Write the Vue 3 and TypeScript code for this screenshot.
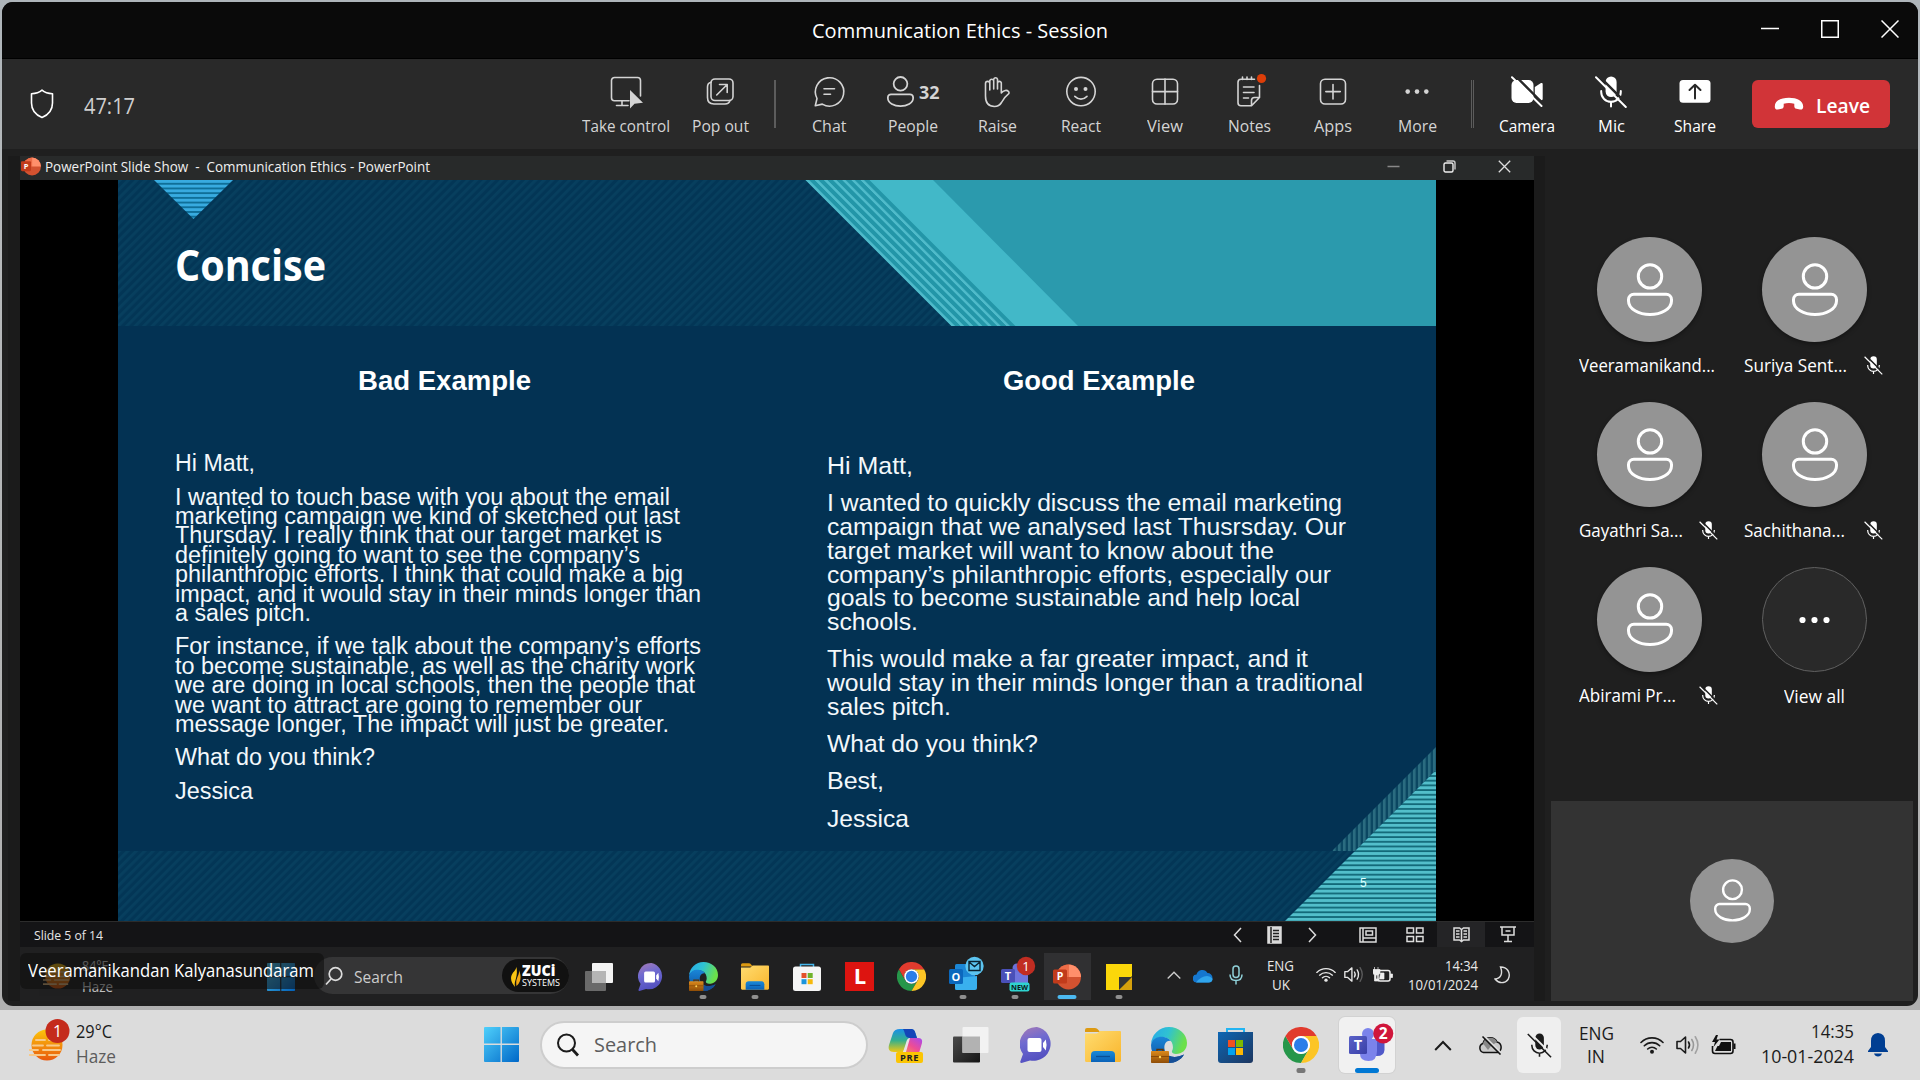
<script setup lang="ts">
import type { Directive } from 'vue'

// Squeezes or stretches a line of text to a given width in pixels.
const vFit: Directive<HTMLElement, number> = {
  mounted(el, { value }) {
    const natural = el.getBoundingClientRect().width
    if (!natural) return
    el.style.transform = `scaleX(${value / natural})`
    el.style.marginRight = `${value - natural}px`
  },
}

interface Line { t: string; w: number }

const showTitle = 'PowerPoint Slide Show\u00a0 -\u00a0 Communication Ethics - PowerPoint'

const badExample: Line[][] = [
  [{ t: 'Hi Matt,', w: 80 }],
  [
    { t: 'I wanted to touch base with you about the email', w: 495 },
    { t: 'marketing campaign we kind of sketched out last', w: 505 },
    { t: 'Thursday. I really think that our target market is', w: 487 },
    { t: 'definitely going to want to see the company’s', w: 465 },
    { t: 'philanthropic efforts. I think that could make a big', w: 508 },
    { t: 'impact, and it would stay in their minds longer than', w: 526 },
    { t: 'a sales pitch.', w: 136 },
  ],
  [
    { t: 'For instance, if we talk about the company’s efforts', w: 526 },
    { t: 'to become sustainable, as well as the charity work', w: 520 },
    { t: 'we are doing in local schools, then the people that', w: 520 },
    { t: 'we want to attract are going to remember our', w: 467 },
    { t: 'message longer, The impact will just be greater.', w: 494 },
  ],
  [{ t: 'What do you think?', w: 200 }],
  [{ t: 'Jessica', w: 78 }],
]

const goodExample: Line[][] = [
  [{ t: 'Hi Matt,', w: 86 }],
  [
    { t: 'I wanted to quickly discuss the email marketing', w: 515 },
    { t: 'campaign that we analysed last Thusrsday. Our', w: 519 },
    { t: 'target market will want to know about the', w: 447 },
    { t: 'company’s philanthropic efforts, especially our', w: 504 },
    { t: 'goals to become sustainable and help local', w: 473 },
    { t: 'schools.', w: 91 },
  ],
  [
    { t: 'This would make a far greater impact, and it', w: 481 },
    { t: 'would stay in their minds longer than a traditional', w: 536 },
    { t: 'sales pitch.', w: 124 },
  ],
  [{ t: 'What do you think?', w: 211 }],
  [{ t: 'Best,', w: 57 }],
  [{ t: 'Jessica', w: 82 }],
]

interface Person { name: string; w: number; muted: boolean }
const people: Person[] = [
  { name: 'Veeramanikand...', w: 136, muted: false },
  { name: 'Suriya Sent...', w: 103, muted: true },
  { name: 'Gayathri Sa...', w: 104, muted: true },
  { name: 'Sachithana...', w: 101, muted: true },
  { name: 'Abirami Pr...', w: 97, muted: true },
]
</script>

<template>
  <div class="screen">
    <svg class="defs" width="0" height="0" aria-hidden="true">
      <defs>
        <linearGradient id="g-win" x1="0" y1="0" x2="1" y2="1"><stop offset="0" stop-color="#4fd0fb" /><stop offset="1" stop-color="#0067c8" /></linearGradient>
        <linearGradient id="g-folder" x1="0" y1="0" x2="1" y2="1"><stop offset="0" stop-color="#ffdc70" /><stop offset="1" stop-color="#f9b52c" /></linearGradient>
        <linearGradient id="g-blue" x1="0" y1="0" x2="0" y2="1"><stop offset="0" stop-color="#1a8ad8" /><stop offset="1" stop-color="#0a62b8" /></linearGradient>
        <linearGradient id="g-edge" x1="0" y1="0" x2="1" y2=".3"><stop offset="0" stop-color="#27a9ea" /><stop offset=".5" stop-color="#2fc2d2" /><stop offset="1" stop-color="#6be04a" /></linearGradient>
        <linearGradient id="g-edge2" x1="0" y1="0" x2="0" y2="1"><stop offset="0" stop-color="#1a86d8" /><stop offset="1" stop-color="#0b4f9e" /></linearGradient>
        <linearGradient id="g-video" x1="0" y1="0" x2=".3" y2="1"><stop offset="0" stop-color="#a77bb5" /><stop offset=".45" stop-color="#6f6ad0" /><stop offset="1" stop-color="#5350c0" /></linearGradient>
        <linearGradient id="g-store" x1="0" y1="0" x2="1" y2="1"><stop offset="0" stop-color="#0d67b4" /><stop offset="1" stop-color="#1d365f" /></linearGradient>
        <linearGradient id="g-sun" x1="0" y1="0" x2="0" y2="1"><stop offset="0" stop-color="#fcc60c" /><stop offset="1" stop-color="#e9590c" /></linearGradient>
        <linearGradient id="g-case" x1="0" y1="0" x2="0" y2="1"><stop offset="0" stop-color="#dc8a1c" /><stop offset="1" stop-color="#8f4d06" /></linearGradient>
        <linearGradient id="g-cop1" x1="0" y1="0" x2="0" y2="1"><stop offset="0" stop-color="#1a8fe8" /><stop offset=".5" stop-color="#35b08c" /><stop offset="1" stop-color="#f2c811" /></linearGradient>
        <linearGradient id="g-cop2" x1="1" y1="0" x2="0" y2="1"><stop offset="0" stop-color="#a648f0" /><stop offset=".5" stop-color="#ee4d94" /><stop offset="1" stop-color="#fb9a50" /></linearGradient>
        <linearGradient id="g-dark" x1="0" y1="0" x2="1" y2="1"><stop offset="0" stop-color="#4a4a4a" /><stop offset="1" stop-color="#151515" /></linearGradient>
        <linearGradient id="g-teams" x1="0" y1="0" x2="1" y2="1"><stop offset="0" stop-color="#5a62c8" /><stop offset="1" stop-color="#3a40a8" /></linearGradient>

        <symbol id="i-person" viewBox="0 0 46 54">
          <g fill="none" stroke="currentColor" stroke-width="3">
            <circle cx="23" cy="13.4" r="11.7" />
            <path d="M6.8 31.2H39.2A5.3 5.3 0 0 1 44.5 36.5V38C44.5 46 34 51.5 23 51.5S1.5 46 1.5 38V36.5A5.3 5.3 0 0 1 6.8 31.2Z" />
          </g>
        </symbol>
        <symbol id="i-mic-off" viewBox="0 0 32 32">
          <rect x="10.6" y=".5" width="11" height="20.5" rx="5.5" fill="currentColor" />
          <path d="M6.2 15v1a9.8 9.8 0 0 0 19.6 0v-1M16 26v4.5" fill="none" stroke="currentColor" stroke-width="2" />
          <path d="M3.6 -.4L33.4 29.4" stroke="var(--cut)" stroke-width="2.4" />
          <path d="M1 1.2L30.8 31" stroke="currentColor" stroke-width="2" />
        </symbol>
        <symbol id="i-win" viewBox="0 0 36 36">
          <path d="M0 1Q0 0 1 0H17V17H0ZM18.4 0H35Q36 0 36 1V17H18.4ZM0 18.4H17V36H1Q0 36 0 35ZM18.4 18.4H36V35Q36 36 35 36H18.4Z" fill="url(#g-win)" />
        </symbol>
        <symbol id="i-folder" viewBox="0 0 36 34">
          <path d="M0 2Q0 0 2 0H10Q12 0 13 1.5L15 4H0Z" fill="#dd9a12" />
          <path d="M0 5.500H12L15 3H35Q36 3 36 4V32.500Q36 34 34.500 34H1.500Q0 34 0 32.500Z" fill="url(#g-folder)" />
          <path d="M6 34V27Q6 23 10 23H26Q30 23 30 27V34Z" fill="url(#g-blue)" />
          <path d="M11 28.500H25" stroke="#0a4f96" stroke-width="1.300" />
        </symbol>
        <symbol id="i-edge" viewBox="0 0 36 36">
          <path d="M0 17A18 18 0 0 1 18 0C28 0 36 7 36 16C36 23 31 27 25 27C22 27 20.500 25.500 21 24C23 21 22 14 17 11.500C11 8.500 2 11 0 17Z" fill="url(#g-edge)" />
          <path d="M0 18C1 11 8 9 13 10C18 11 20 14 20 14C15 13 12 18 14 24C16 30 24 32 33 27.500C30 33 24 36 18 36A18 18 0 0 1 0 18Z" fill="url(#g-edge2)" />
          <path d="M14 24C16 30 24 32 33 27.500C30 33 24 36 18 36Z" fill="#164f96" />
          <rect x="0" y="24" width="18" height="12" rx=".8" fill="url(#g-case)" />
          <path d="M6 24V22.500H12V24" fill="none" stroke="#5d3305" stroke-width="1.400" />
          <path d="M0 29.500H18" stroke="#8a4b08" /><circle cx="9" cy="30" r="1.200" fill="#ffd75c" />
        </symbol>
        <symbol id="i-chrome" viewBox="0 0 48 48">
          <path d="M24 48A24 24 0 0 1 3.200 12L13.600 30A12 12 0 0 0 34.400 30Z" fill="#26964a" />
          <path d="M44.800 12A24 24 0 0 1 24 48L34.400 30A12 12 0 0 0 24 12Z" fill="#fcc525" />
          <path d="M3.200 12A24 24 0 0 1 44.800 12H24A12 12 0 0 0 13.600 30Z" fill="#e13b2e" />
          <circle cx="24" cy="24" r="12" fill="#fff" /><circle cx="24" cy="24" r="9.400" fill="#2b7de9" />
        </symbol>
        <symbol id="i-video" viewBox="0 0 34 36">
          <path d="M17 0A17 17 0 1 1 10 33.500L1.500 36Q0 36 .3 34.500L3 27A17 17 0 0 1 17 0Z" fill="url(#g-video)" />
          <rect x="7.500" y="11" width="14" height="14" rx="2" fill="#fff" />
          <path d="M23 16L25.800 12.500Q27.300 18 25.800 23.500L23 20Z" fill="#fff" />
        </symbol>
        <symbol id="i-sun" viewBox="0 0 34 32">
          <circle cx="18" cy="16" r="15.500" fill="url(#g-sun)" />
          <path d="M4 16.500H14M18 16.500H30M0 21H9M14 21H31M0 26H16M20 26H30M7 11H16M20 11H28" stroke="#f7c98a" stroke-width="1.900" stroke-linecap="round" />
        </symbol>
        <symbol id="i-ppt" viewBox="0 0 28 26">
          <circle cx="15.500" cy="13" r="12.500" fill="#d35230" />
          <path d="M15.500 .5A12.500 12.500 0 0 1 28 13H15.500Z" fill="#ff8f6b" />
          <path d="M15.500 .5A12.500 12.500 0 0 0 3 13H15.500Z" fill="#ed6c47" />
          <rect x="0" y="5.500" width="14" height="14" rx="1.500" fill="#c13b1b" />
          <text x="7" y="16.300" text-anchor="middle" class="glyph" font-size="10.500" fill="#fff">P</text>
        </symbol>
        <symbol id="i-wifi" viewBox="0 0 24 18">
          <g fill="none" stroke="currentColor" stroke-width="1.600" stroke-linecap="round">
            <path d="M1 6.500A15.500 15.500 0 0 1 23 6.500M4.300 9.800A11 11 0 0 1 19.700 9.800M7.700 13A6.200 6.200 0 0 1 16.300 13" />
          </g><circle cx="12" cy="15.800" r="2" fill="currentColor" />
        </symbol>
        <symbol id="i-speaker" viewBox="0 0 24 20">
          <g fill="none" stroke="currentColor" stroke-width="1.600" stroke-linejoin="round" stroke-linecap="round">
            <path d="M1 6.500H4.500L9.500 2V18L4.500 13.500H1Z" /><path d="M12.500 7Q14.500 10 12.500 13" />
            <path d="M15.800 4.500Q19.200 10 15.800 15.500" opacity="var(--mid, 1)" /><path d="M19.300 1.800Q24.500 10 19.300 18.200" opacity=".3" />
          </g>
        </symbol>
      </defs>
    </svg>

    <main class="window">
      <header class="titlebar">
        <span></span>
        <div class="title"><span v-fit="296" class="t">Communication Ethics - Session</span></div>
        <div class="winctl">
          <svg width="18" height="18"><path d="M0 8.500H18" stroke="#fff" stroke-width="1.500" /></svg>
          <svg width="18" height="18"><rect x=".75" y=".75" width="16.500" height="16.500" fill="none" stroke="#fff" stroke-width="1.500" /></svg>
          <svg width="18" height="18"><path d="M.5 .5L17.500 17.500M17.500 .5L.5 17.500" stroke="#fff" stroke-width="1.500" /></svg>
        </div>
      </header>

      <nav class="toolbar">
        <svg class="shield" width="24" height="30" viewBox="0 0 24 30"><path d="M12 1.200C9.500 3.400 5.500 4.600 1.500 4.700V14C1.500 21 5.500 25.800 12 28.500C18.500 25.800 22.500 21 22.500 14V4.700C18.500 4.600 14.500 3.400 12 1.200Z" fill="none" stroke="#fff" stroke-width="1.600" stroke-linejoin="round" /></svg>
        <span v-fit="51" class="t timer">47:17</span>
        <div class="tools">
          <div class="tool wide">
            <svg class="ic" viewBox="0 0 32 32"><path d="M19 24.700H4.500A3 3 0 0 1 1.500 21.700V4.500A3 3 0 0 1 4.500 1.500H27.500A3 3 0 0 1 30.500 4.500V20M12 24.700V29.500M6.500 29.500H18" /><path d="M20 14V32.500L24.500 27.800L33 26.700Z" class="solid" /></svg>
            <span v-fit="88" class="t">Take control</span>
          </div>
          <div class="tool">
            <svg class="ic" viewBox="0 0 32 32"><rect x="7" y="3" width="22" height="21.500" rx="4" /><path d="M7 6.200Q3.500 7 3.500 11V21.500Q3.500 28 10 28H21Q25 28 26 24.500M12.700 19L23 8.700M15.500 8.500H23.200V16.500" /></svg>
            <span v-fit="57" class="t">Pop out</span>
          </div>
          <i class="divider"></i>
          <div class="tool">
            <svg class="ic" viewBox="0 0 32 32"><path d="M2.300 29.700L4 22.500A14.200 14.200 0 1 1 9.300 28.100ZM11 12.700H21.500M11 18.300H17.500" /></svg>
            <span v-fit="34.5" class="t">Chat</span>
          </div>
          <div class="tool">
            <div class="count"><svg width="27" height="31.700"><use href="#i-person" /></svg><b v-fit="20.5" class="t">32</b></div>
            <span v-fit="50" class="t">People</span>
          </div>
          <div class="tool">
            <svg class="ic" viewBox="0 0 32 32"><path d="M4.500 7.500A2.100 2.100 0 0 1 8.800 7.500M4.500 7.500V20C4.500 27 8 30.500 13.500 30.500C17 30.500 19 29 20.500 26.500C22 23.500 24 20.500 27.500 17.800C29 16.500 27 14 24.300 14.500C22.500 14.900 21.300 15.800 20.300 17V6.800A2 2 0 0 0 16.500 6.800M8.800 14V4.800A2 2 0 0 1 12.700 4.800V13M12.700 4V3.200A2 2 0 0 1 16.500 3.200V13M8.800 7V14" /></svg>
            <span v-fit="39" class="t">Raise</span>
          </div>
          <div class="tool">
            <svg class="ic" viewBox="0 0 32 32"><circle cx="16" cy="15.600" r="14.200" /><path d="M9.800 20.300Q16 26 22 20.300" /><g class="solid"><circle cx="11" cy="13" r="2" /><circle cx="20.500" cy="13" r="2" /></g></svg>
            <span v-fit="40" class="t">React</span>
          </div>
          <div class="tool">
            <svg class="ic" viewBox="0 0 32 32"><rect x="3.500" y="3.200" width="25" height="24.800" rx="4.500" /><path d="M16 3V28M3.500 15.600H28.500" /></svg>
            <span v-fit="36" class="t">View</span>
          </div>
          <div class="tool">
            <svg class="ic" viewBox="0 0 32 32"><path d="M21.500 3.300H8Q5 3.300 5 6.300V26.700Q5 29.700 8 29.700H18.500L26.500 21.500V9.500M18.500 29.500V24.500Q18.500 21.500 21.500 21.500H26.500M9.500 1V3.500M14 1V3.500M18.500 1V3.500M10.500 11H21M10.500 16.500H21M10.500 22H15.500" /><circle cx="28.500" cy="2.500" r="4.600" fill="#dd3e09" stroke="none" /></svg>
            <span v-fit="43" class="t">Notes</span>
          </div>
          <div class="tool">
            <svg class="ic" viewBox="0 0 32 32"><rect x="3.500" y="3.200" width="25" height="24.800" rx="4.500" /><path d="M16 8.500V23M8.800 15.600H23.300" /></svg>
            <span v-fit="38" class="t">Apps</span>
          </div>
          <div class="tool">
            <svg class="ic" viewBox="0 0 32 32"><g class="solid"><circle cx="6.700" cy="15.600" r="2.300" /><circle cx="16" cy="15.600" r="2.300" /><circle cx="25.300" cy="15.600" r="2.300" /></g></svg>
            <span v-fit="39" class="t">More</span>
          </div>
          <i class="divider twin"></i>
          <div class="tool lit">
            <svg class="ic" viewBox="0 0 32 32"><g class="solid"><rect x=".5" y="4" width="22" height="23" rx="5" /><path d="M23.800 11L30 7Q31.700 6.500 31.700 8V23Q31.700 24.500 30 24L23.800 20Z" /></g><path d="M4 -.5L33 28.500" stroke="#292929" stroke-width="2.400" /><path d="M1 1.200L30.500 30" stroke-width="2" /></svg>
            <span v-fit="56" class="t">Camera</span>
          </div>
          <div class="tool lit">
            <svg class="ic" style="--cut: #292929"><use href="#i-mic-off" /></svg>
            <span v-fit="27" class="t">Mic</span>
          </div>
          <div class="tool lit">
            <svg class="ic" viewBox="0 0 32 32"><rect x=".5" y="4" width="31" height="22.800" rx="3.500" class="solid" /><path d="M16 22.500V9M10.500 14L16 8.700L21.500 14" stroke="#292929" stroke-width="2" /></svg>
            <span v-fit="42" class="t">Share</span>
          </div>
          <button class="leave">
            <svg width="30" height="14" viewBox="0 0 30 14"><path d="M.8 9.500C.8 3.500 7 .7 15 .7S29.200 3.500 29.200 9.500C29.200 12 28 12.900 26 12.500L22.500 11.800C20.800 11.400 20.300 10.500 20.300 9V6.800Q15 5 9.700 6.800V9C9.700 10.500 9.200 11.400 7.500 11.800L4 12.500C2 12.900 .8 12 .8 9.500Z" fill="#fff" /></svg>
            <b v-fit="54" class="t">Leave</b>
          </button>
        </div>
      </nav>

      <div class="body">
        <section class="stage">
          <div class="ppt-title">
            <svg width="20" height="19"><use href="#i-ppt" /></svg>
            <span v-fit="385" class="t">{{ showTitle }}</span>
            <div class="ppt-ctl">
              <svg width="13" height="13"><path d="M.5 6.500H12.500" stroke="#888" stroke-width="1.300" /></svg>
              <svg width="13" height="13"><rect x="1" y="3" width="9" height="9" rx="1.500" fill="none" stroke="#eee" stroke-width="1.400" /><path d="M3.500 1H10Q12 1 12 3V9.500" fill="none" stroke="#ccc" stroke-width="1.400" /></svg>
              <svg width="13" height="13"><path d="M.8 .8L12.200 12.200M12.200 .8L.8 12.200" stroke="#ddd" stroke-width="1.300" /></svg>
            </div>
          </div>

          <div class="canvas">
            <article class="slide">
              <svg class="art" width="1318" height="741" viewBox="0 0 1318 741">
                <defs>
                  <pattern id="p-diag" width="6" height="6" patternUnits="userSpaceOnUse" patternTransform="rotate(45)"><rect width="6" height="6" fill="#033656" /><rect width="2.800" height="6" fill="#073f5e" /></pattern>
                  <pattern id="p-tri" width="8" height="4.700" patternUnits="userSpaceOnUse"><rect width="8" height="4.700" fill="#0f6f99" /><rect width="8" height="2.800" fill="#38abe0" /></pattern>
                  <pattern id="p-corner" width="8" height="4.700" patternUnits="userSpaceOnUse"><rect width="8" height="4.700" fill="#126878" /><rect width="8" height="2.900" fill="#53bfcb" /></pattern>
                  <pattern id="p-vert" width="5" height="8" patternUnits="userSpaceOnUse"><rect width="5" height="8" fill="#0b4762" /><rect width="2.600" height="8" fill="#2b6c80" /></pattern>
                  <pattern id="p-band" width="9.150" height="146" patternUnits="userSpaceOnUse" patternTransform="translate(687.500 0) skewX(45)"><rect width="9.150" height="146" fill="#2396a8" /><rect width="3.500" height="146" fill="#4fbbca" /></pattern>
                </defs>
                <rect width="1318" height="741" fill="#033253" />
                <rect width="1318" height="146" fill="url(#p-diag)" />
                <rect y="671" width="1318" height="70" fill="url(#p-diag)" />
                <path d="M687.500 0H1318V146H833.500Z" fill="#2b9aad" />
                <path d="M687.500 0H751.500L897.500 146H833.500Z" fill="url(#p-band)" />
                <path d="M751.500 0H815L960 146H897.500Z" fill="#42b8c8" />
                <path d="M36 0H115L75.500 39Z" fill="url(#p-tri)" />
                <path d="M1318 567V590L1237 671H1214Z" fill="url(#p-vert)" />
                <path d="M1318 590V741H1167Z" fill="url(#p-corner)" />
              </svg>
              <h1><span v-fit="151" class="t">Concise</span></h1>
              <div class="columns">
                <div class="col bad">
                  <h2><span v-fit="173" class="t">Bad Example</span></h2>
                  <p v-for="(para, i) in badExample" :key="i"><span v-for="line in para" :key="line.t" class="ln"><span v-fit="line.w" class="t">{{ line.t }}</span></span></p>
                </div>
                <div class="col good">
                  <h2><span v-fit="192" class="t">Good Example</span></h2>
                  <p v-for="(para, i) in goodExample" :key="i"><span v-for="line in para" :key="line.t" class="ln"><span v-fit="line.w" class="t">{{ line.t }}</span></span></p>
                </div>
              </div>
              <span class="pageno">5</span>
            </article>
          </div>

          <div class="status">
            <span v-fit="69" class="t">Slide 5 of 14</span>
            <div class="views">
              <svg width="9" height="16" class="v1"><path d="M8 1L1.500 8L8 15" /></svg>
              <svg width="15" height="18" class="v2"><rect x="1" y="1" width="13" height="16" fill="#d8d8d8" /><path d="M4 1V17M6 4.500H12M6 7.500H12M6 10.500H12M6 13.500H12" stroke="#222" /></svg>
              <svg width="9" height="16" class="v3"><path d="M1 1L7.500 8L1 15" /></svg>
              <svg width="18" height="16" class="v4"><rect x="1" y="1" width="16" height="14" /><path d="M4 1V11H17M4 11V15" /><rect x="7" y="4" width="6.500" height="4" /></svg>
              <svg width="18" height="16" class="v5"><path d="M1 1H7.500V6H1ZM10.500 1H17V6H10.500ZM1 9.500H7.500V14.500H1ZM10.500 9.500H17V14.500H10.500Z" /></svg>
              <span class="active"><svg width="17" height="17"><path d="M1 2H6.500L8.500 3.500L10.500 2H16V14H10.500L8.500 15.500L6.500 14H1ZM8.500 3V16M3 5H6.500M3 8H6.500M3 11H6.500M10.500 5H14M10.500 8H14M10.500 11H14" /></svg></span>
              <svg width="16" height="17" class="v7"><path d="M0 1H16M2 1V9H14V1M8 9V15.500M4 15.500H12M5.500 5H10.500" /></svg>
            </div>
          </div>

          <div class="taskbar inner">
            <div class="weather">
              <svg width="28" height="26"><use href="#i-sun" /></svg>
              <div class="two"><span v-fit="29" class="t">84°F</span><span v-fit="31" class="t">Haze</span></div>
            </div>
            <svg class="start" width="28" height="28"><use href="#i-win" /></svg>
            <div class="search">
              <svg width="18" height="20" viewBox="0 0 18 20"><circle cx="10.500" cy="8" r="6.300" /><path d="M6 13L1 18.500" /></svg>
              <span v-fit="49" class="t">Search</span>
              <div class="zuci">
                <svg width="10" height="24" viewBox="0 0 10 22"><path d="M5 0C7 5 0 7 0 13C0 17 2 19 4 22C2.500 15 8 12 5 0Z" fill="#f9c513" /><path d="M8 5C9 10 4 13 5.500 21C11 16 10 10 8 5Z" fill="#f3a713" /></svg>
                <div><b v-fit="38" class="t">ZUCi</b><span v-fit="38" class="t">SYSTEMS</span></div>
              </div>
            </div>
            <div class="slots">
              <span class="slot"><svg width="28" height="28"><rect x="0" y="8" width="21" height="20" rx="1" fill="#6a6a6a" /><rect x="7" y="0" width="21" height="20" rx="1" fill="#f3f3f3" /><rect x="7" y="8" width="14" height="12" fill="#b5b5b5" /></svg></span>
              <span class="slot"><svg width="27" height="28"><use href="#i-video" /></svg></span>
              <span class="slot run"><svg width="29" height="29"><use href="#i-edge" /></svg></span>
              <span class="slot run"><svg width="28" height="27"><use href="#i-folder" /></svg></span>
              <span class="slot"><svg width="28" height="28" viewBox="0 0 28 28"><path d="M7.500 5V1.500H20.500V5" fill="none" stroke="#45b6ec" stroke-width="1.500" /><rect y="3.500" width="28" height="24.500" rx="2.500" fill="#f5f5f5" /><path d="M8.500 10H13.500V15H8.500Z" fill="#e3512a" /><path d="M14.700 10H19.700V15H14.700Z" fill="#6fb32b" /><path d="M8.500 16.200H13.500V21.200H8.500Z" fill="#1b95dc" /><path d="M14.700 16.200H19.700V21.200H14.700Z" fill="#f6b90c" /></svg></span>
              <span class="slot"><svg width="29" height="29"><rect width="29" height="29" fill="#dd1410" /><text x="15" y="22" text-anchor="middle" class="glyph" font-size="22" fill="#fff">L</text></svg></span>
              <span class="slot run-none"><svg width="29" height="29"><use href="#i-chrome" /></svg></span>
              <span class="slot run"><svg class="over" width="28" height="28"><rect x="6" y="1" width="20" height="26" rx="1.500" fill="#1b86d4" /><path d="M6 15L28 13V25Q28 27 26 27H8Q6 27 6 25Z" fill="#39b0ee" /><rect y="6" width="14" height="15" rx="1.500" fill="#0b68bd" /><text x="7" y="17.500" text-anchor="middle" class="glyph" font-size="11" fill="#fff">O</text><circle cx="25.500" cy="3" r="9.200" fill="#5cc4f0" /><path d="M20 -1.500H31V7.500H20ZM20 -1L25.500 3.500L31 -1" fill="none" stroke="#0b2433" stroke-width="1.400" /></svg></span>
              <span class="slot run"><svg class="over" width="28" height="28"><circle cx="16" cy="5" r="4.500" fill="#6b70d8" /><rect x="9" y="9" width="18" height="17" rx="4" fill="#6f75dd" /><rect y="6" width="14" height="14" rx="1.500" fill="#4950b8" /><text x="7" y="17" text-anchor="middle" class="glyph" font-size="11" fill="#fff">T</text><rect x="8.500" y="19.500" width="20" height="9" rx="2" fill="#2fd3d0" /><text x="18.500" y="27" text-anchor="middle" class="glyph" font-size="7.300" fill="#0c1a1c">NEW</text><circle cx="25" cy="3" r="9.200" fill="#c12d22" /><text x="25" y="7.500" text-anchor="middle" font-size="13" fill="#fff">1</text></svg></span>
              <span class="slot sel"><svg width="28" height="26"><use href="#i-ppt" /></svg></span>
              <span class="slot run"><svg width="26" height="26"><path d="M0 0H26V12L13 26H0Z" fill="#fbd70a" /><path d="M13 26V13H26L13 26Z" fill="#333" /><path d="M26 13V26H13Z" fill="#d5a00d" /></svg></span>
            </div>
            <div class="tray">
              <svg width="14" height="8" class="a1"><path d="M.7 7.500L7 1.200L13.300 7.500" fill="none" stroke="#ccc" stroke-width="1.400" /></svg>
              <svg width="20" height="14" class="a2"><path d="M4 13.500A4 4 0 0 1 3.500 5.500A6 6 0 0 1 14.500 4A5 5 0 0 1 19.500 9Q19.500 13.500 15.500 13.500Z" fill="#1577cf" /><path d="M3 13.500Q8 7 14 7Q19.500 8 19.500 10.500Q19 13.500 15.500 13.500Z" fill="#30a5ec" /></svg>
              <svg width="14" height="20" class="a3"><rect x="4" y="1" width="6" height="11.500" rx="3" /><path d="M1 9.500Q1 15.500 7 15.500T13 9.500M7 15.500V19.500" /></svg>
              <div class="two lang"><span v-fit="27" class="t">ENG</span><span v-fit="18" class="t">UK</span></div>
              <svg width="20" height="15" class="a4"><use href="#i-wifi" /></svg>
              <svg width="20" height="17" class="a5"><use href="#i-speaker" /></svg>
              <svg width="20" height="16" class="a6" viewBox="0 0 20 16"><rect x="5" y="3.500" width="12" height="10.500" rx="2" fill="none" stroke="#eee" stroke-width="1.500" /><path d="M7.500 6H11V12H6.500ZM17.500 7H19.500V10.500H17.500ZM0 2.500H7V6.500L4.500 8H3V12H6V14H1.500V8L0 6.500ZM1.500 0V3M5 0V3" fill="#eee" stroke="#eee" stroke-width=".7" /></svg>
              <div class="two clock"><span v-fit="33" class="t">14:34</span><span v-fit="70" class="t">10/01/2024</span></div>
              <svg width="17" height="18" class="a7"><path d="M6.500 1C14 1 16 7 15 11C13.500 17 6 19 1 13C7 12.500 9 7.500 6.500 1Z" fill="none" stroke="#ddd" stroke-width="1.400" /></svg>
            </div>
          </div>
          <div class="presenter"><span v-fit="286" class="t">Veeramanikandan Kalyanasundaram</span></div>
        </section>

        <aside class="side">
          <div class="roster">
            <div v-for="p in people" :key="p.name" class="member">
              <div class="avatar"><svg width="46" height="54"><use href="#i-person" /></svg></div>
              <div class="name"><span v-fit="p.w" class="t">{{ p.name }}</span><svg v-if="p.muted" width="19" height="19" style="--cut: #1f1f1f"><use href="#i-mic-off" /></svg></div>
            </div>
            <div class="member">
              <div class="avatar more"><svg width="32" height="8"><circle cx="3.500" cy="4" r="3.100" /><circle cx="15.500" cy="4" r="3.100" /><circle cx="27.500" cy="4" r="3.100" /></svg></div>
              <div class="name all"><span v-fit="61" class="t">View all</span></div>
            </div>
          </div>
          <div class="self"><div class="avatar small"><svg width="37" height="43.400"><use href="#i-person" /></svg></div></div>
        </aside>
      </div>
    </main>

    <footer class="taskbar outer">
      <div class="weather">
        <svg class="over" width="34" height="32"><use href="#i-sun" /><circle cx="28.500" cy="2" r="12" fill="#c42b1c" /><text x="28.500" y="8" text-anchor="middle" font-size="16" fill="#fff">1</text></svg>
        <div class="two"><span v-fit="38" class="t">29°C</span><span v-fit="40" class="t dim">Haze</span></div>
      </div>
      <svg class="start" width="35" height="35"><use href="#i-win" /></svg>
      <div class="search">
        <svg width="24" height="24" viewBox="0 0 24 24"><circle cx="10.500" cy="10" r="8.500" /><path d="M16.500 16.500L22 22.500" stroke-width="2.800" /></svg>
        <span v-fit="63" class="t">Search</span>
      </div>
      <div class="slots">
        <span class="slot"><svg width="35" height="35" viewBox="0 0 35 35"><path d="M12 1H23C26 1 27 3 28 7L29 10H22L15 24H6C1 24 0 21 1 17L5 5Q6.500 1 12 1Z" fill="url(#g-cop1)" /><path d="M15 1H23C26 1 27 3 28 7L29 10H22Q18 10 17 6Q16 2 15 1Z" fill="#1445b8" /><path d="M22 10H30Q35 10 34 15L31 25H12Q17 25 18 20Q19.500 11 22 10Z" fill="url(#g-cop2)" /><path d="M22 10Q19 10 18 15L15 24H18Q20 17 22 10Z" fill="#e9e2e8" /><rect x="8" y="24" width="27" height="11" rx="2" fill="#fbc503" /><text x="21.500" y="33" text-anchor="middle" class="glyph" font-size="9.300" letter-spacing=".6" fill="#222">PRE</text></svg></span>
        <span class="slot"><svg width="36" height="36"><rect x="0" y="9.500" width="27" height="26" rx="1" fill="url(#g-dark)" /><rect x="9.500" y="0" width="26" height="26" rx="1" fill="#f2f2f2" /><rect x="9.500" y="9.500" width="17.500" height="16.500" fill="#b2b2b2" /></svg></span>
        <span class="slot"><svg width="34" height="36"><use href="#i-video" /></svg></span>
        <span class="slot"><svg width="36" height="34"><use href="#i-folder" /></svg></span>
        <span class="slot"><svg width="36" height="36"><use href="#i-edge" /></svg></span>
        <span class="slot"><svg width="35" height="35"><path d="M9 5V1H26V7" fill="none" stroke="#22b4f2" stroke-width="2" /><path d="M0 4H35V32Q35 35 32 35H3Q0 35 0 32Z" fill="url(#g-store)" /><path d="M10 12H17V19H10Z" fill="#f05021" /><path d="M18 12H25V19H18Z" fill="#7fb900" /><path d="M10 20H17V27H10Z" fill="#03a3ee" /><path d="M18 20H25V27H18Z" fill="#feb803" /></svg></span>
        <span class="slot run"><svg width="36" height="36"><use href="#i-chrome" /></svg></span>
        <span class="slot sel"><svg class="over" width="36" height="34"><circle cx="19" cy="6" r="6" fill="#7b83eb" /><path d="M24 11H34Q35.500 11 35.500 13V22Q35 28 28 28H24Z" fill="#5059c9" /><path d="M11 11H28V23Q28 33 19.500 33T11 26Z" fill="#7b83eb" /><rect y="8" width="18" height="18" rx="1.500" fill="url(#g-teams)" /><text x="9" y="22" text-anchor="middle" class="glyph" font-size="14.500" fill="#fff">T</text><circle cx="34.300" cy="5.500" r="10" fill="#d0163b" /><text x="34.300" y="11" text-anchor="middle" class="glyph" font-size="15.500" fill="#fff">2</text></svg></span>
      </div>
      <div class="tray">
        <svg width="18" height="11" class="b1"><path d="M1.200 10L9 2L16.800 10" fill="none" stroke="#1b1b1b" stroke-width="2" /></svg>
        <svg width="26" height="20" class="b2"><path d="M5.500 17.500A4.700 4.700 0 0 1 5 8.500A7.500 7.500 0 0 1 19 7A5.500 5.500 0 0 1 19.500 17.500Z" fill="#c9c9c9" stroke="#111" stroke-width="1.500" /><path d="M5 8.500A7.500 7.500 0 0 1 19 7L13 11L10 15Z" fill="#888" /><path d="M6 1L24 19" stroke="#dcdcdc" stroke-width="2" /><path d="M4.500 1.500L22.500 19.500" stroke="#111" stroke-width="1.600" /></svg>
        <span class="micbox"><svg width="25" height="25" style="--cut: #efefef"><use href="#i-mic-off" /></svg></span>
        <div class="two lang"><span v-fit="35" class="t">ENG</span><span v-fit="18" class="t">IN</span></div>
        <svg width="24" height="18" class="b4"><use href="#i-wifi" /></svg>
        <svg width="24" height="20" class="b5"><use href="#i-speaker" /></svg>
        <svg width="26" height="20" class="b6" viewBox="0 0 26 20"><path d="M8.500 4.500H19.500Q22 4.500 22 7V16Q22 18.500 19.500 18.500H4Q1.500 18.500 1.500 16V11" fill="none" stroke="#111" stroke-width="1.600" /><path d="M10 7H20V16H4L6.500 11H8ZM22.500 8.500H24.500V14H22.500ZM5 0L1 7H4L2.500 12L8.500 4.500H5.500L7 0Z" fill="#111" /></svg>
        <div class="two clock"><span v-fit="43" class="t">14:35</span><span v-fit="93" class="t">10-01-2024</span></div>
        <svg width="20" height="24" class="b7"><path d="M10 0Q17 .5 17 8V14L20 18V19H0V18L3 14V8Q3 .5 10 0ZM6 20.500H14Q13 23.500 10 23.500T6 20.500Z" fill="#003e92" /></svg>
      </div>
    </footer>
  </div>
</template>

<style>
html, body { margin: 0; overflow: hidden; background: #b4b9bd; }
</style>

<style scoped>
.screen { width: 1920px; height: 1080px; box-sizing: border-box; padding-top: 2px; display: flex; flex-direction: column; background: linear-gradient(#aeb5ba 0, #b6b9bb 200px, #b0b0b0 1000px, #b2b2b2); font-family: "Open Sans", "Noto Sans", sans-serif; color: #fff; overflow: hidden; }
.defs { position: absolute; }
.t { display: inline-block; flex: none; white-space: nowrap; transform-origin: 0 50%; }
svg { display: block; flex: none; }
.glyph { font-family: "Open Sans", sans-serif; font-weight: 700; }
.over { overflow: visible; }

.window { margin: 0 2px; height: 1004px; border-radius: 11px; overflow: hidden; background: #1f1f1f; display: flex; flex-direction: column; flex: none; }
.titlebar { height: 56px; background: #0a0a0a; border-bottom: 1px solid #000; display: grid; grid-template-columns: 1fr auto 1fr; align-items: center; flex: none; }
.title { font-size: 20px; line-height: 28px; padding-top: 1px; }
.winctl { display: flex; gap: 42px; justify-content: flex-end; padding: 0 19px 3px 0; }
.toolbar { height: 90px; background: #292929; display: flex; align-items: center; flex: none; }
.shield { margin-left: 28px; }
.timer { margin-left: 30px; font-size: 21px; line-height: 28px; color: #cfcfcf; padding-top: 3px; }
.tools { display: flex; margin-left: auto; padding-right: 28px; height: 90px; color: #d4d4d4; }
.tool { width: 84px; display: flex; flex-direction: column; align-items: center; padding-top: 17px; font-size: 17px; line-height: 20px; }
.tool.wide { width: 104px; }
.tool.lit { color: #fff; }
.tool > .t { margin-top: 8px; }
.ic { width: 32px; height: 32px; overflow: visible; fill: none; stroke: currentColor; stroke-width: 1.6; stroke-linecap: round; stroke-linejoin: round; }
.ic use { stroke: none; }
.ic .solid { fill: currentColor; stroke: none; }
.count { display: flex; gap: 5px; align-items: center; height: 32px; font-size: 18px; line-height: 20px; }
.divider { width: 2px; height: 48px; margin: 21px 11.5px 0; background: #5c5c5c; flex: none; }
.divider.twin { width: 1px; background: none; border: solid #5c5c5c; border-width: 0 1px; margin: 21px 11px 0 12px; }
.leave { margin: 21px 0 0 15px; width: 138px; height: 48px; border: 0; border-radius: 6px; background: #d13438; color: #fff; display: flex; align-items: center; padding: 0 0 0 22px; gap: 12px; font: 600 20.5px/28px "Open Sans", sans-serif; }
.leave b { font-weight: 600; padding-top: 2px; }

.body { display: flex; flex: 1; padding: 7px 5px 5px 6px; }
.stage { width: 1514px; height: 845px; border: solid #1b1b1b; border-width: 0 11px 0 12px; display: flex; flex-direction: column; position: relative; flex: none; }
.ppt-title { height: 24px; background: #282a2a; display: flex; align-items: center; font-size: 14px; line-height: 20px; color: #f0f0f0; padding-bottom: 2px; box-sizing: border-box; flex: none; }
.ppt-title > svg { margin: 0 4px 1px 1px; }
.ppt-ctl { display: flex; gap: 42.500px; margin-left: auto; padding: 0 23px 1px 0; }
.canvas { background: #000; height: 741px; padding-left: 98px; flex: none; }
.slide { position: relative; width: 1318px; height: 741px; overflow: hidden; font-family: "Liberation Sans", Arial, sans-serif; }
.art { position: absolute; inset: 0; }
h1, h2, p { margin: 0; position: relative; }
h1 { font: 700 43px/50px "Open Sans", sans-serif; padding: 60px 0 0 57px; height: 114px; box-sizing: border-box; }
.columns { display: flex; position: relative; padding-left: 57px; }
.col { display: flex; flex-direction: column; color: #f3f8fb; }
.bad { width: 652px; font-size: 23.300px; line-height: 19.450px; gap: 13.800px; }
.good { width: 560px; font-size: 24.200px; line-height: 23.720px; gap: 13.600px; }
h2 { font-size: 27px; line-height: 30px; height: 30px; margin: 71.500px 0 45px; color: #fff; }
.bad h2 { margin-left: 183px; }
.good h2 { margin-left: 176px; }
.ln { display: block; height: 1lh; white-space: nowrap; }
.ln .t { vertical-align: top; }
.pageno { position: absolute; left: 1242px; top: 696px; font-size: 12px; line-height: 14px; color: #dff; }
.status { height: 26px; background: #141416; display: flex; align-items: center; padding-left: 14px; font-size: 12.800px; line-height: 18px; color: #e6e6e6; box-sizing: border-box; border-top: 1px solid #2c2c2c; flex: none; }
.views { display: flex; align-items: center; margin-left: auto; fill: none; stroke: #ddd; stroke-width: 1.5; height: 25px; }
.v2 { margin-left: 25px; }
.v3 { margin-left: 26px; }
.v4 { margin-left: 42px; }
.v5 { margin-left: 29px; }
.v7 { margin: 0 18px 0 15px; }
.active { width: 48px; height: 25px; margin-left: 13px; background: #242426; display: grid; place-items: center; }

.taskbar { display: flex; align-items: center; flex: none; }
.two { display: flex; flex-direction: column; }
.weather { display: flex; align-items: center; }
.slots { display: flex; align-self: stretch; }
.slot { display: grid; place-items: center; position: relative; }
.search { display: flex; align-items: center; box-sizing: border-box; fill: none; }
.tray { display: flex; align-items: center; align-self: stretch; }
.clock { align-items: flex-end; }
.lang { align-items: center; }

.inner { height: 54px; background: #202021; color: #e8e8e8; font-size: 14px; line-height: 18.500px; }
.inner .weather { width: 247px; padding-left: 23px; gap: 11px; opacity: .8; box-sizing: border-box; padding-top: 4px; }
.inner .two { line-height: 19px; padding-top: 1px; }
.inner .weather .two { line-height: 21px; padding-top: 0; }
.inner .start { opacity: .9; margin-top: 5px; }
.inner .search { width: 255px; height: 37px; margin: 3px 0 0 19px; border-radius: 19px; background: #353536; padding-left: 11px; font-size: 16px; line-height: 20px; stroke: #ddd; stroke-width: 1.7; color: #ccc; }
.inner .search > .t { margin-left: 11px; padding-top: 2px; }
.zuci { margin-left: auto; width: 67px; height: 33px; border-radius: 17px; background: #111; color: #fff; display: flex; align-items: center; gap: 1px; padding-left: 9px; box-sizing: border-box; stroke: none; }
.zuci div { display: flex; flex-direction: column; }
.zuci b { font-size: 15px; line-height: 15px; font-weight: 800; }
.zuci span { font-size: 9.500px; line-height: 10px; }
.inner .slot { width: 52.050px; padding-top: 5px; box-sizing: border-box; }
.inner .slots { margin-left: 4px; }
.inner .sel { background: linear-gradient(#303032, #303032) 50% 6px / 47px 47px no-repeat; }
.slot.run::after, .slot.sel::after { content: ""; position: absolute; left: 50%; bottom: 2px; width: 7px; height: 4px; border-radius: 2px; background: #8f8f8f; transform: translateX(-50%); }
.inner .slot.sel::after { width: 19px; background: #4cb9f0; }
.inner .tray { flex: 1; color: #e8e8e8; padding-top: 1px; }
.a1 { margin-left: 21px; }
.a2 { margin-left: 12px; margin-top: 2px; }
.a3 { margin-left: 16px; fill: none; stroke: #8fd0d8; stroke-width: 1.500; }
.inner .lang { width: 40px; margin-left: 18px; }
.a4 { margin-left: 15px; }
.a5 { margin-left: 8px; }
.a6 { margin-left: 9px; }
.inner .clock { width: 85px; margin-right: 16px; }
.presenter { position: absolute; left: 0; top: 797px; width: 304px; height: 36px; box-sizing: border-box; padding: 0 8px; border-radius: 6px; background: rgba(14, 14, 14, .58); font-size: 18px; line-height: 35px; }

.side { width: 364px; height: 845px; display: flex; flex-direction: column; justify-content: space-between; margin-left: 6px; flex: none; }
.roster { display: grid; grid-template-columns: 165px 165px; grid-auto-rows: 165px; padding: 81px 0 0 16px; }
.member { display: flex; flex-direction: column; align-items: center; }
.avatar { width: 105px; height: 105px; border-radius: 50%; background: #949494; display: grid; place-items: center; box-shadow: 0 2px 4px rgba(0, 0, 0, .35); flex: none; }
.avatar.more { background: #292929; border: 1px solid #606060; box-sizing: border-box; box-shadow: none; fill: #fff; }
.name { display: flex; align-items: center; justify-content: space-between; align-self: stretch; padding: 0 14px 0 12px; margin-top: 10px; font-size: 18px; line-height: 26px; }
.name svg { margin-top: 1px; }
.name.all { justify-content: center; padding: 0; margin-top: 11px; }
.self { width: 362px; height: 200px; background: #333; display: grid; place-items: center; }
.avatar.small { width: 84px; height: 84px; box-shadow: none; }

.outer { height: 70px; margin-top: 4px; background: #dcdcdc; color: #1b1b1b; font-size: 17.500px; line-height: 24px; }
.outer .weather { width: 484px; box-sizing: border-box; padding: 0 0 0 29px; gap: 13px; }
.dim { color: #5c5c5c; }
.outer .start { margin-bottom: 1px; }
.outer .search { width: 328px; height: 48px; margin: 0 0 1px 21px; border-radius: 24px; background: #f5f5f5; border: 2px solid #cdcdcd; padding-left: 14px; font-size: 20px; color: #5d5d5d; stroke: #1b1b1b; stroke-width: 2; }
.outer .search .t { margin-left: 14px; }
.outer .slots { margin-left: 4px; }
.outer .slot { width: 66px; }
.outer .slot.sel { background: #f1f1f1; width: 56px; height: 56px; align-self: center; margin: 0 5px; border-radius: 6px; box-shadow: 0 0 0 1px #d2d2d2; }
.outer .slot.run::after { width: 9px; height: 5px; bottom: 7px; background: #777; }
.outer .slot.sel::after { width: 24px; height: 5px; bottom: 0; border-radius: 3px; background: #0078d4; }
.b1 { margin-left: 34px; }
.b2 { margin-left: 26px; }
.micbox { width: 44px; height: 56px; margin-left: 13px; border-radius: 6px; background: #efefef; display: grid; place-items: center; }
.outer .lang { width: 60px; margin-left: 5px; line-height: 23px; }
.outer .weather .two, .outer .clock { line-height: 24.300px; padding-bottom: 3px; }
.b4 { margin-left: 14px; }
.b5 { margin-left: 12px; --mid: .35; }
.b6 { margin-left: 11px; }
.outer .clock { width: 117px; margin-right: 14px; }
</style>
